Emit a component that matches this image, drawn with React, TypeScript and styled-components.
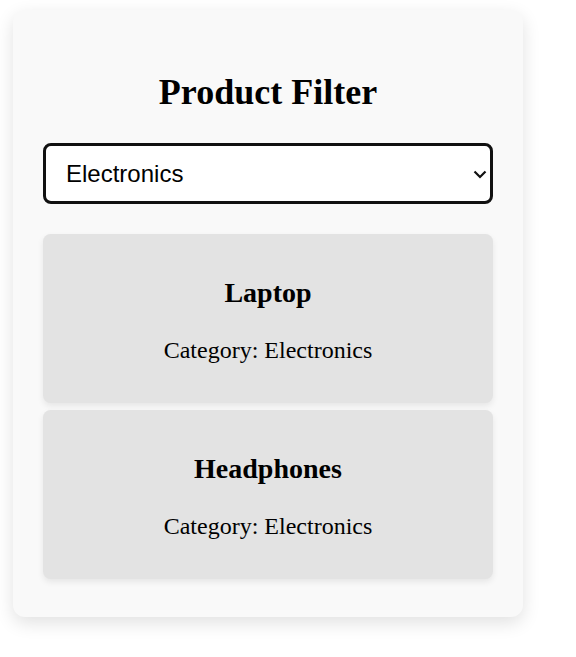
import { FC, useState } from "react";
import styled, { createGlobalStyle } from "styled-components";

const GlobalStyle = createGlobalStyle`
  body {
    margin: 0;
    background: #ffffff;
    font-family: "Liberation Serif", "Times New Roman", serif;
    color: #000;
  }
`;

const Page = styled.div`
  padding: 10px 0 40px 13px;
`;

const Card = styled.div`
  box-sizing: border-box;
  width: 510px;
  padding: 30px;
  background-color: #f9f9f9;
  border-radius: 12px;
  box-shadow: 0 6px 18px rgba(0, 0, 0, 0.12);
`;

const Title = styled.h2`
  margin: 31px 0 30px;
  font-size: 36px;
  font-weight: bold;
  text-align: center;
`;

const SelectWrap = styled.div`
  position: relative;
  margin-bottom: 30px;
`;

const Select = styled.select`
  display: block;
  box-sizing: border-box;
  width: 100%;
  height: 61px;
  padding: 0 40px 0 20px;
  font-family: "Liberation Sans", Arial, sans-serif;
  font-size: 24px;
  color: #000;
  background: #ffffff;
  border: 3px solid #111;
  border-radius: 8px;
  appearance: none;
  outline: none;
`;

const Chevron = styled.svg`
  position: absolute;
  right: 6px;
  top: 50%;
  width: 14px;
  height: 9px;
  margin-top: -4px;
  pointer-events: none;
`;

const Item = styled.div`
  margin: 7px 0;
  padding: 15px;
  background-color: #e3e3e3;
  border-radius: 7.5px;
  box-shadow: 0 3px 6px rgba(0, 0, 0, 0.08);
  text-align: center;

  &:first-of-type {
    margin-top: 0;
  }
  &:last-child {
    margin-bottom: 8px;
  }
`;

const ItemName = styled.h3`
  margin: 28px 0;
  font-size: 28px;
  font-weight: bold;
`;

const ItemCategory = styled.p`
  margin: 0 0 24px;
  font-size: 24px;
`;

const products = [
  { name: "Laptop", category: "Electronics" },
  { name: "Headphones", category: "Electronics" },
  { name: "T-Shirt", category: "Clothing" },
  { name: "Novel", category: "Books" },
];

const App: FC = () => {
  const [category, setCategory] = useState("Electronics");
  const visible = products.filter((p) => p.category === category);

  return (
    <Page>
      <GlobalStyle />
      <Card>
        <Title>Product Filter</Title>
        <SelectWrap>
          <Select value={category} onChange={(e) => setCategory(e.target.value)}>
            <option value="Electronics">Electronics</option>
            <option value="Clothing">Clothing</option>
            <option value="Books">Books</option>
          </Select>
          <Chevron viewBox="0 0 14 9" fill="none">
            <path d="M1.5 1.5 L7 7 L12.5 1.5" stroke="#111" strokeWidth="2.2" />
          </Chevron>
        </SelectWrap>
        <div>
          {visible.map((p) => (
            <Item key={p.name}>
              <ItemName>{p.name}</ItemName>
              <ItemCategory>Category: {p.category}</ItemCategory>
            </Item>
          ))}
        </div>
      </Card>
    </Page>
  );
};

export default App;
